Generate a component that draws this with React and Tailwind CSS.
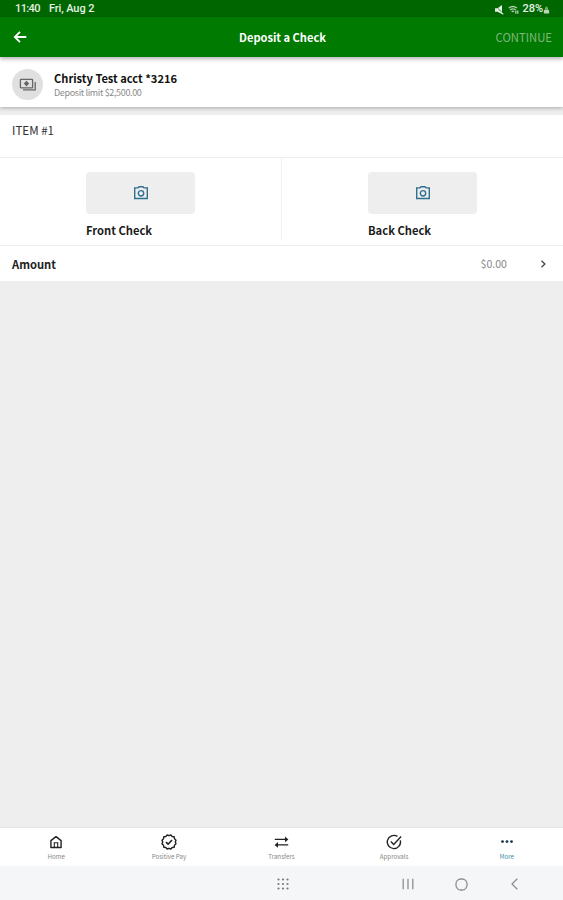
import React from 'react';

const CameraIcon = () => (
  <svg className="h-4 w-4 text-[#2f6f8f]" viewBox="0 0 16 16" fill="none" stroke="currentColor" strokeWidth="1.4">
    <path d="M1.7 2.9H5l1-1.2h4l1 1.2h3.3v10.6H1.7z" />
    <circle cx="8" cy="8.3" r="2.7" />
  </svg>
);

const CashIcon = () => (
  <svg className="h-[13px] w-[18px] text-[#666666]" viewBox="0 0 18 13" fill="none" stroke="currentColor" strokeWidth="1.3">
    <rect x="1.4" y="1.4" width="12.2" height="8.4" rx="0.6" />
    <path d="M7.5 3.6 9.3 5.6 7.5 7.6 5.7 5.6z" fill="currentColor" />
    <path d="M4 11.8h12.2V4" />
  </svg>
);

const HomeIcon = () => (
  <svg className="h-4 w-4" viewBox="0 0 16 16" fill="none" stroke="currentColor" strokeWidth="1.4">
    <path d="M2.9 6.6 8 2.6l5.1 4v6.9H2.9z" strokeLinejoin="round" />
    <path d="M6.3 13.3V8.8h3.4v4.5" strokeWidth="1.1" />
  </svg>
);

const BadgeIcon = () => (
  <svg className="h-4 w-4" viewBox="0 0 16 16" fill="none" stroke="currentColor" strokeWidth="1.4" strokeLinejoin="round">
    <path d="m8 1.7 1.8-.7 1.4 1.5 2 .3.3 2L15 6.2 14.3 8l.7 1.8-1.5 1.4-.3 2-2 .3L9.8 15 8 14.3 6.2 15l-1.4-1.5-2-.3-.3-2L1 9.8 1.7 8 1 6.2l1.5-1.4.3-2 2-.3L6.2 1z" />
    <path d="m5 8.2 2.1 2 3.9-4.2" strokeWidth="1.6" />
  </svg>
);

const TransferIcon = () => (
  <svg className="h-4 w-4" viewBox="0 0 16 16" fill="none" stroke="currentColor" strokeWidth="1.4">
    <path d="M1.8 5.4h11M4.5 10.9h10.7" />
    <path d="M12 2.6v5.6L15.4 5.4zM5 8.1v5.6L1.6 10.9z" fill="currentColor" stroke="none" />
  </svg>
);

const ApprovalIcon = () => (
  <svg className="h-4 w-4" viewBox="0 0 16 16" fill="none" stroke="currentColor" strokeWidth="1.4">
    <path d="M14.3 6.4A6.6 6.6 0 1 1 11.4 2.4" />
    <path d="m4.9 7.6 2.8 2.8 7.4-7.8" />
  </svg>
);

const MoreIcon = () => (
  <svg className="h-4 w-4 text-[#17394d]" viewBox="0 0 16 16" fill="currentColor">
    <circle cx="3.5" cy="7.6" r="1.4" />
    <circle cx="8" cy="7.6" r="1.4" />
    <circle cx="12.5" cy="7.6" r="1.4" />
  </svg>
);

const tabs = [
  { label: 'Home', icon: HomeIcon },
  { label: 'Positive Pay', icon: BadgeIcon },
  { label: 'Transfers', icon: TransferIcon },
  { label: 'Approvals', icon: ApprovalIcon },
  { label: 'More', icon: MoreIcon, active: true },
];

const StatusBar = () => (
  <div className="flex h-[17px] items-center justify-between bg-[#006700] pt-[2px] pr-[13px] pl-[15px] font-[Roboto,sans-serif] text-[11px] font-medium text-[#e4f0e4]">
    <div className="flex gap-[9px]">
      <span className="tracking-[-0.6px]">11:40</span>
      <span className="tracking-[-0.1px]">Fri, Aug 2</span>
    </div>
    <div className="flex items-center">
      <svg className="mr-[4px] h-[10px] w-[9px]" viewBox="0 0 9 10" fill="currentColor">
        <path d="M0 3.2h2.5L7 0v9L2.5 6.7H0z" />
        <path d="m3.2 3.7 5.3 5.1" stroke="#006700" strokeWidth=".8" />
        <path d="m5.2 6.6 3.1 2.8" stroke="currentColor" strokeWidth="1.1" />
      </svg>
      <svg className="mr-[3px] h-[10px] w-[11px]" viewBox="0 0 12 10" fill="none" stroke="currentColor" strokeWidth="1.5">
        <path d="M.8 2.8Q5.3-.6 9.8 2.8M2.3 4.9q3-2.2 6 0M4 6.9q1.3-1 2.6 0" opacity=".75" />
        <path d="M8.6 5.5V9M10.7 5.5V9" strokeWidth="1.1" />
      </svg>
      <span>28%</span>
      <svg className="h-[8px] w-[7px]" viewBox="0 0 8 8" fill="currentColor">
        <path d="M2.2 1h1V0h1.6v1h1v3H2.2z" opacity=".5" />
        <path d="M1 4h6v4H1z" opacity=".8" />
      </svg>
    </div>
  </div>
);

const CheckPhoto = ({ label }) => (
  <div className="flex flex-1 flex-col items-center pt-[14px]">
    <div className="w-[109px]">
      <button className="flex h-[42px] w-full items-center justify-center rounded-[4px] bg-[#eeeeee]">
        <CameraIcon />
      </button>
      <div className="mt-[7px] text-[11.2px] leading-[18px] font-bold text-[#1c1c1c]">{label}</div>
    </div>
  </div>
);

const App = () => {
  return (
    <div className="flex h-[900px] w-[563px] flex-col overflow-hidden bg-[#eeeeee] font-['Noto_Sans_CJK_SC','Noto_Sans',sans-serif]">
      <StatusBar />
      <header className="relative z-20 grid h-10 grid-cols-3 items-center bg-[#007a00] pr-[11px] pl-[13px] text-white shadow-[0_2px_4px_rgba(0,0,0,0.3)]">
        <svg className="h-[14px] w-[14px]" viewBox="0 0 14 14" fill="none" stroke="currentColor" strokeWidth="1.8">
          <path d="M13.3 7H2M7 1.8 1.8 7 7 12.2" />
        </svg>
        <h1 className="text-center text-[11.1px] font-bold">Deposit a Check</h1>
        <button className="text-right text-[11.3px] text-[#7fb77f]">CONTINUE</button>
      </header>

      <section className="relative z-10 flex h-[50px] items-center bg-white pt-[5px] pl-3 shadow-[0_1px_4px_rgba(0,0,0,0.3)]">
        <div className="flex h-[31px] w-[31px] items-center justify-center rounded-full bg-[#e0e0e0]">
          <CashIcon />
        </div>
        <div className="ml-[11px]">
          <div className="text-[11.1px] leading-[16px] font-bold text-[#111111]">Christy Test acct *3216</div>
          <div className="text-[9px] leading-[13px] tracking-[-0.35px] text-[#8a8a8a]">Deposit limit $2,500.00</div>
        </div>
      </section>

      <section className="mt-2 bg-white">
        <div className="h-[43px] border-b border-[#eeeeee] pt-[6px] pl-3 text-[11.6px] leading-[18px] text-[#333333]">ITEM #1</div>
        <div className="flex h-[88px] border-b border-[#eeeeee]">
          <CheckPhoto label="Front Check" />
          <div className="mb-1 w-px bg-[#f1f1f1]" />
          <CheckPhoto label="Back Check" />
        </div>
        <div className="flex h-[35px] items-center pr-4 pl-3 text-[11.2px]">
          <span className="pt-px font-bold text-[#222222]">Amount</span>
          <span className="ml-auto text-[10.6px] text-[#888888]">$0.00</span>
          <svg className="ml-[33px] h-2 w-[7px] text-[#444444]" viewBox="0 0 7 8" fill="none" stroke="currentColor" strokeWidth="1.3">
            <path d="m1.5.7 3.4 3.3-3.4 3.3" />
          </svg>
        </div>
      </section>

      <nav className="mt-auto flex h-[39px] border-t border-[#e4e4e4] bg-white">
        {tabs.map(({ label, icon: Icon, active }) => (
          <button key={label} className="flex flex-1 flex-col items-center pt-[6px] text-[#222222]">
            <Icon />
            <span className={`mt-[2px] text-[6.2px] leading-[9px] ${active ? 'text-[#3f8fa5]' : 'text-[#888888]'}`}>{label}</span>
          </button>
        ))}
      </nav>

      <div className="flex h-[34px] items-center bg-[#f5f6f8] pt-[2px] pl-[277px] text-[#8d8f92]">
        <svg className="h-3 w-3 text-[#77797c]" viewBox="0 0 12 12" fill="currentColor">
          {[1.5, 6, 10.5].map((y) => [1.5, 6, 10.5].map((x) => <circle key={`${x}-${y}`} cx={x} cy={y} r="1.1" />))}
        </svg>
        <svg className="ml-[113px] h-3 w-3" viewBox="0 0 12 12" stroke="currentColor" strokeWidth="1.3">
          <path d="M1.2.8v10.4M6 .8v10.4M10.8.8v10.4" />
        </svg>
        <svg className="ml-[41px] h-[13px] w-[13px]" viewBox="0 0 13 13" fill="none" stroke="currentColor" strokeWidth="1.3">
          <rect x="1" y="1" width="11" height="11" rx="4.8" />
        </svg>
        <svg className="ml-[43px] h-3 w-[7px]" viewBox="0 0 7 12" fill="none" stroke="currentColor" strokeWidth="1.3">
          <path d="M6.3.8 1 6l5.3 5.2" />
        </svg>
      </div>
    </div>
  );
};

export default App;
